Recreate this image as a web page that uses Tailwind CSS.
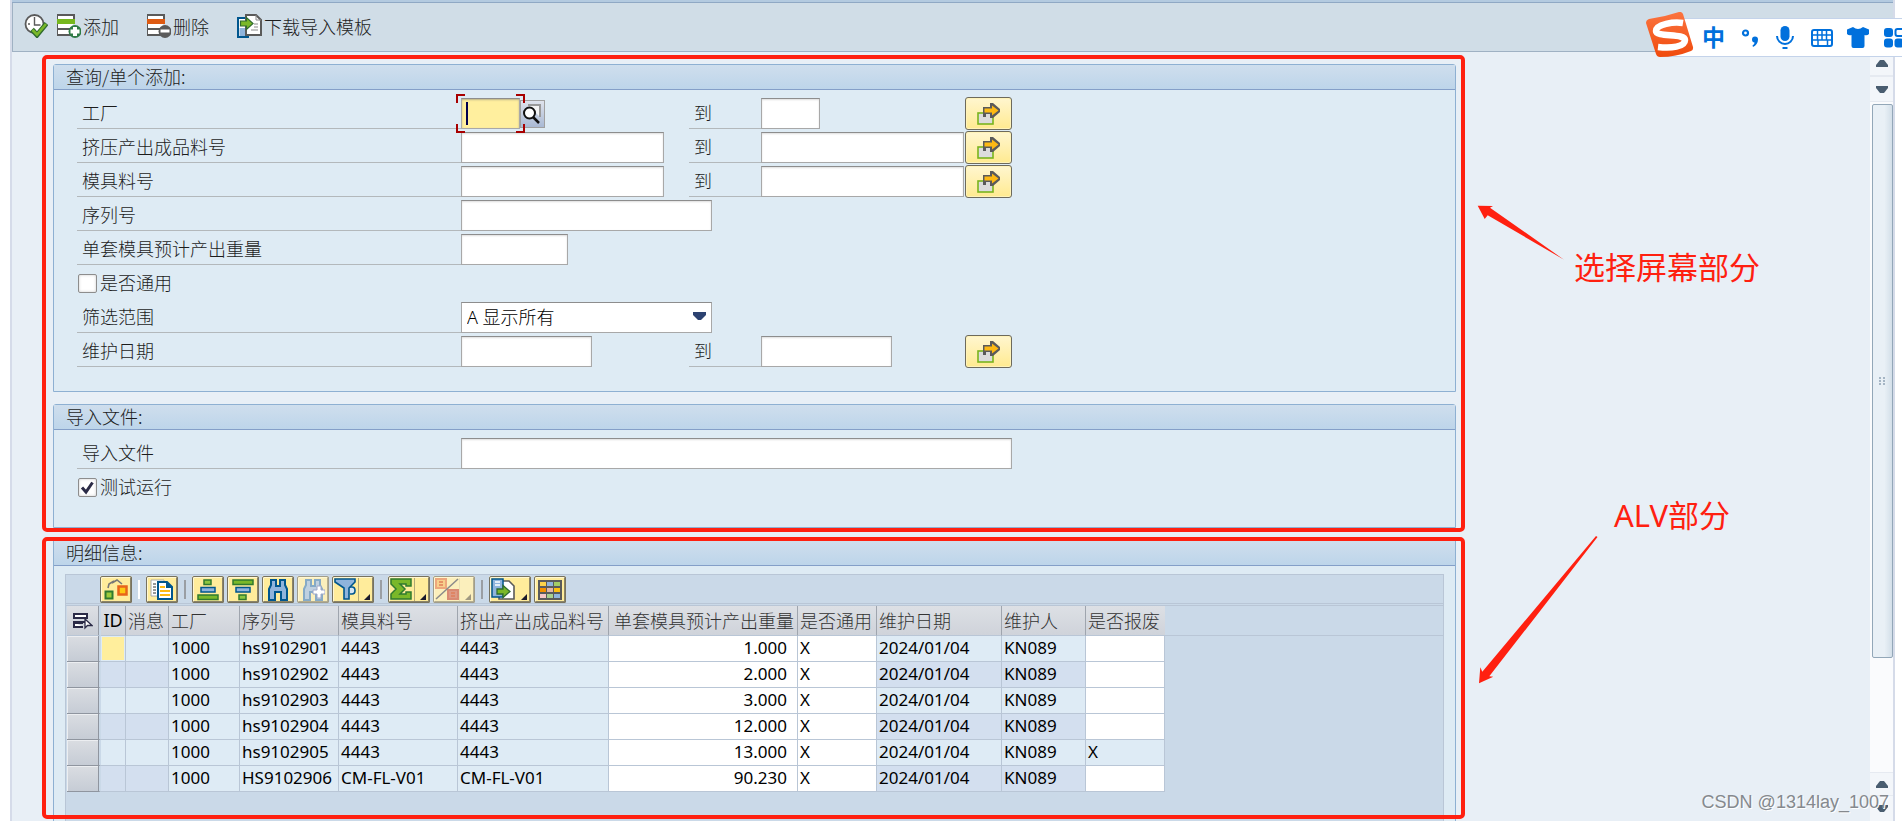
<!DOCTYPE html>
<html lang="zh-CN">
<head>
<meta charset="utf-8">
<meta name="viewport" content="width=device-width, initial-scale=1">
<title>模具维护</title>
<script src="https://cdn.jsdelivr.net/npm/@tailwindcss/browser@4"></script>
</head>
<body class="h-screen overflow-hidden bg-white pl-[10px] pr-[7px] font-['Noto_Sans','Noto_Sans_CJK_SC',sans-serif] text-[18px] leading-6 text-[#1c1c1c]">

<!-- shared symbols -->
<svg class="hidden">
  <symbol id="multi" viewBox="0 0 24 22">
    <rect x="1" y="10" width="15" height="11" fill="#dcdcdc" stroke="#7ab41d" stroke-width="1.600"/>
    <path d="M6 4h7V0h3l7 6v3l-7 6h-3v-4H9v3H6z" fill="#5a5a5a"/>
    <path d="M7.500 5.500H15V2.500l6.500 5L15 12.500V9.500H7.500z" fill="#fdb913"/>
  </symbol>
  <symbol id="corner" viewBox="0 0 6 6"><path d="M6 0V6H0z" fill="#1a1a2a"/></symbol>
</svg>

<div class="flex h-full flex-col border-x-2 border-[#d5dbe9] bg-[#e8eff6]">
  <div class="h-[3px] shrink-0 border-b border-[#8fa8c4] bg-[#b3cae0]"></div>

  <!-- application toolbar -->
  <header class="flex h-[49px] shrink-0 items-center border-b border-l border-b-[#9fb1c3] border-l-[#9fb1c3] bg-[#d0dde7] pb-[2px] pl-[11px] font-['Noto_Sans_CJK_SC',sans-serif] font-light">
    <button type="button" aria-label="执行" class="mr-[9px] h-6 w-6">
      <svg viewBox="0 0 24 24" class="size-6">
        <circle cx="10.500" cy="10" r="9" fill="#fff" stroke="#5a5a5a" stroke-width="1.800"/>
        <path d="M10.500 3v8h6M4 10h2M10.500 17v-2" fill="none" stroke="#5a5a5a" stroke-width="1.400"/>
        <path d="M8 15.500l5 5.500L22.500 9.500" fill="none" stroke="#2f6b2f" stroke-width="5"/>
        <path d="M8.500 16l4.500 4.500L22 10" fill="none" stroke="#7ab829" stroke-width="2.600"/>
      </svg>
    </button>
    <button type="button" class="mr-[28px] flex items-center gap-[2px]">
      <svg viewBox="0 0 24 24" class="size-6">
        <path d="M0 0h18v22H0z" fill="#5a5a5a"/>
        <path d="M1 2h15v12H1zM1 16h15v4H1z" fill="#fff"/>
        <path d="M0 5h18v5H0z" fill="#76b71d"/>
        <path d="M16 10h2v12h-2z" fill="#d0dde7"/>
        <circle cx="18" cy="17.500" r="6.500" fill="#2f7a46"/>
        <path d="M16 13h4v2.500h2.500v4H20V22h-4v-2.500h-2.500v-4H16z" fill="#fff"/>
      </svg>
      <span>添加</span>
    </button>
    <button type="button" class="mr-[28px] flex items-center gap-[2px]">
      <svg viewBox="0 0 24 24" class="size-6">
        <path d="M0 0h18v22H0z" fill="#5a5a5a"/>
        <path d="M1 2h15v12H1zM1 16h15v4H1z" fill="#fff"/>
        <path d="M0 5h18v5H0z" fill="#dd5a12"/>
        <path d="M16 10h2v12h-2z" fill="#d0dde7"/>
        <circle cx="18" cy="17.500" r="6.500" fill="#5a5a5a"/>
        <path d="M13.500 15.500h9v3h-9z" fill="#fff"/>
      </svg>
      <span>删除</span>
    </button>
    <button type="button" class="flex items-center gap-[2px]">
      <svg viewBox="0 0 25 24" class="h-6 w-[25px]">
        <path d="M8 4H1v19h11" fill="#fff" stroke="#00568e" stroke-width="2"/>
        <rect x="2.500" y="14" width="6" height="8" fill="#8fb4dc"/>
        <path d="M9 1h10l5 5v15H9z" fill="#fff" stroke="#5a5a5a" stroke-width="2"/>
        <path d="M19 1v5h5M17 10h4M17 13h4M14 16h7" fill="none" stroke="#8a8a8a"/>
        <path d="M3.500 7h6V3.500l6.500 6-6.500 6V12h-6z" fill="#7ab829" stroke="#2f6b2f" stroke-width="1.200"/>
      </svg>
      <span>下载导入模板</span>
    </button>
  </header>

  <div class="flex min-h-0 flex-1">
    <main class="flex min-w-0 flex-1 flex-col gap-[5px] pl-[30px] pt-[3px]">

      <!-- selection screen -->
      <div class="flex shrink-0">
        <div class="min-w-0 flex-1 rounded-[5px] border-4 border-[#ff2010] pl-[7px] pr-[5px] pt-[5px]">
          <section class="rounded-t-[3px] border border-[#8eb0d2] bg-[#deebf4] pb-[23px]">
            <h2 class="flex h-[25px] items-center border-b border-[#849fc8] bg-linear-to-b from-[#cfdeed] to-[#bdd5ea] pb-[2px] pl-3 font-['Noto_Sans_CJK_SC',sans-serif] font-light">查询/单个添加:</h2>
            <form class="pl-[23px] pt-[6px] font-['Noto_Sans_CJK_SC',sans-serif] font-light">
              <div class="flex h-[34px] items-end pb-px">
                <label for="plant" class="flex h-[31px] w-[384px] items-center border-b border-[#b3b8bb] pb-[2px] pl-[5px]">工厂</label>
                <div class="flex w-[228px] items-end">
                  <div class="relative">
                    <input id="plant" class="block h-[31px] w-[59px] border border-[#a8a8a8] border-t-[#8d8d8d] bg-[#ffef9e] px-1.5 shadow-[inset_0_1px_2px_#b9b18a]">
                    <span class="absolute left-[5px] top-1 h-[23px] w-[2px] bg-[#00004f]"></span>
                    <svg viewBox="0 0 69 39" class="pointer-events-none absolute -left-[5px] -top-[4px] z-10 h-[39px] w-[69px]" fill="none" stroke="#a80000" stroke-width="2">
                      <path d="M1 9V1H9M60 1h8v8M68 30v8h-8M9 38H1v-8"/>
                    </svg>
                  </div>
                  <button type="button" aria-label="搜索帮助" class="mb-px h-[28px] w-[25px] border border-[#a0a0a0] bg-linear-to-b from-[#dfe3ec] to-[#a9b9d4]">
                    <svg viewBox="0 0 23 26" class="h-[26px] w-[23px]">
                      <path d="M7 4h12v12" fill="#f4f4f4" stroke="#9a9a9a" stroke-width="2"/>
                      <circle cx="8.500" cy="12" r="5.500" fill="#fff" stroke="#111" stroke-width="2"/>
                      <path d="M12 16l6 6" stroke="#111" stroke-width="2.500"/>
                    </svg>
                  </button>
                </div>
                <label for="plant2" class="flex h-[31px] w-[72px] items-center border-b border-[#b3b8bb] pb-[2px] pl-[5px]">到</label>
                <div class="w-[204px]"><input id="plant2" class="block h-[31px] w-[59px] border border-[#a8a8a8] border-t-[#8d8d8d] bg-white px-1.5 shadow-[inset_0_1px_2px_#ddd]"></div>
                <button type="button" aria-label="多项选择" class="-mb-px grid h-[33px] w-[47px] place-items-center rounded-[3px] border border-[#6d6a5c] bg-linear-to-b from-[#fff6cf] to-[#ffea8f] shadow-[inset_0_0_0_1px_#fff3b8]"><svg class="h-[22px] w-6"><use href="#multi"/></svg></button>
              </div>
              <div class="flex h-[34px] items-end pb-px">
                <label for="mat" class="flex h-[31px] w-[384px] items-center border-b border-[#b3b8bb] pb-[2px] pl-[5px]">挤压产出成品料号</label>
                <div class="w-[228px]"><input id="mat" class="block h-[31px] w-[203px] border border-[#a8a8a8] border-t-[#8d8d8d] bg-white px-1.5 shadow-[inset_0_1px_2px_#ddd]"></div>
                <label for="mat2" class="flex h-[31px] w-[72px] items-center border-b border-[#b3b8bb] pb-[2px] pl-[5px]">到</label>
                <div class="w-[204px]"><input id="mat2" class="block h-[31px] w-[203px] border border-[#a8a8a8] border-t-[#8d8d8d] bg-white px-1.5 shadow-[inset_0_1px_2px_#ddd]"></div>
                <button type="button" aria-label="多项选择" class="-mb-px grid h-[33px] w-[47px] place-items-center rounded-[3px] border border-[#6d6a5c] bg-linear-to-b from-[#fff6cf] to-[#ffea8f] shadow-[inset_0_0_0_1px_#fff3b8]"><svg class="h-[22px] w-6"><use href="#multi"/></svg></button>
              </div>
              <div class="flex h-[34px] items-end pb-px">
                <label for="mold" class="flex h-[31px] w-[384px] items-center border-b border-[#b3b8bb] pb-[2px] pl-[5px]">模具料号</label>
                <div class="w-[228px]"><input id="mold" class="block h-[31px] w-[203px] border border-[#a8a8a8] border-t-[#8d8d8d] bg-white px-1.5 shadow-[inset_0_1px_2px_#ddd]"></div>
                <label for="mold2" class="flex h-[31px] w-[72px] items-center border-b border-[#b3b8bb] pb-[2px] pl-[5px]">到</label>
                <div class="w-[204px]"><input id="mold2" class="block h-[31px] w-[203px] border border-[#a8a8a8] border-t-[#8d8d8d] bg-white px-1.5 shadow-[inset_0_1px_2px_#ddd]"></div>
                <button type="button" aria-label="多项选择" class="-mb-px grid h-[33px] w-[47px] place-items-center rounded-[3px] border border-[#6d6a5c] bg-linear-to-b from-[#fff6cf] to-[#ffea8f] shadow-[inset_0_0_0_1px_#fff3b8]"><svg class="h-[22px] w-6"><use href="#multi"/></svg></button>
              </div>
              <div class="flex h-[34px] items-end pb-px">
                <label for="serial" class="flex h-[31px] w-[384px] items-center border-b border-[#b3b8bb] pb-[2px] pl-[5px]">序列号</label>
                <input id="serial" class="block h-[31px] w-[251px] border border-[#a8a8a8] border-t-[#8d8d8d] bg-white px-1.5 shadow-[inset_0_1px_2px_#ddd]">
              </div>
              <div class="flex h-[34px] items-end pb-px">
                <label for="weight" class="flex h-[31px] w-[384px] items-center border-b border-[#b3b8bb] pb-[2px] pl-[5px]">单套模具预计产出重量</label>
                <input id="weight" class="block h-[31px] w-[107px] border border-[#a8a8a8] border-t-[#8d8d8d] bg-white px-1.5 shadow-[inset_0_1px_2px_#ddd]">
              </div>
              <div class="flex h-[34px] items-center gap-[3px] pl-px">
                <input id="common" type="checkbox" class="size-[19px] appearance-none rounded-[2px] border border-[#8d8d8d] bg-white shadow-[inset_0_0_3px_#ccc]">
                <label for="common" class="pb-[2px]">是否通用</label>
              </div>
              <div class="flex h-[34px] items-end pb-px">
                <label for="range" class="flex h-[31px] w-[384px] items-center border-b border-[#b3b8bb] pb-[2px] pl-[5px]">筛选范围</label>
                <div class="relative">
                  <select id="range" class="block h-[31px] w-[251px] appearance-none border border-[#a8a8a8] border-t-[#8d8d8d] bg-white pb-[2px] pl-[5px] font-['Noto_Sans','Noto_Sans_CJK_SC',sans-serif] text-black"><option>A 显示所有</option></select>
                  <svg viewBox="0 0 13 8" class="pointer-events-none absolute right-[6px] top-[10px] h-2 w-[13px]"><path d="M0 0H13V3L8 8H5L0 3z" fill="#2c4271"/></svg>
                </div>
              </div>
              <div class="flex h-[34px] items-end pb-px">
                <label for="date" class="flex h-[31px] w-[384px] items-center border-b border-[#b3b8bb] pb-[2px] pl-[5px]">维护日期</label>
                <div class="w-[228px]"><input id="date" class="block h-[31px] w-[131px] border border-[#a8a8a8] border-t-[#8d8d8d] bg-white px-1.5 shadow-[inset_0_1px_2px_#ddd]"></div>
                <label for="date2" class="flex h-[31px] w-[72px] items-center border-b border-[#b3b8bb] pb-[2px] pl-[5px]">到</label>
                <div class="w-[204px]"><input id="date2" class="block h-[31px] w-[131px] border border-[#a8a8a8] border-t-[#8d8d8d] bg-white px-1.5 shadow-[inset_0_1px_2px_#ddd]"></div>
                <button type="button" aria-label="多项选择" class="-mb-px grid h-[33px] w-[47px] place-items-center rounded-[3px] border border-[#6d6a5c] bg-linear-to-b from-[#fff6cf] to-[#ffea8f] shadow-[inset_0_0_0_1px_#fff3b8]"><svg class="h-[22px] w-6"><use href="#multi"/></svg></button>
              </div>
            </form>
          </section>

          <section class="mt-3 rounded-t-[3px] border border-[#8eb0d2] bg-[#deebf4] pb-[23px] font-['Noto_Sans_CJK_SC',sans-serif] font-light">
            <h2 class="flex h-[25px] items-center border-b border-[#849fc8] bg-linear-to-b from-[#cfdeed] to-[#bdd5ea] pb-[2px] pl-3">导入文件:</h2>
            <div class="pl-[23px] pt-[6px]">
              <div class="flex h-[34px] items-end pb-px">
                <label for="file" class="flex h-[31px] w-[384px] items-center border-b border-[#b3b8bb] pb-[2px] pl-[5px]">导入文件</label>
                <input id="file" class="block h-[31px] w-[551px] border border-[#a8a8a8] border-t-[#8d8d8d] bg-white px-1.5 shadow-[inset_0_1px_2px_#ddd]">
              </div>
              <div class="flex h-[34px] items-center gap-[3px] pl-px">
                <div class="relative">
                  <input id="test" type="checkbox" checked class="peer block size-[19px] appearance-none rounded-[2px] border border-[#8d8d8d] bg-white shadow-[inset_0_0_3px_#ccc]">
                  <svg viewBox="0 0 19 19" class="pointer-events-none invisible absolute inset-0 size-[19px] peer-checked:visible"><path d="M4 9.500l4 4.500L14.500 4.500" fill="none" stroke="#2b2b47" stroke-width="3"/></svg>
                </div>
                <label for="test" class="pb-[2px]">测试运行</label>
              </div>
            </div>
          </section>
        </div>

        <aside class="relative w-[405px] shrink-0 pl-[109px] pt-[192px] font-['Noto_Sans','Noto_Sans_CJK_SC',sans-serif] text-[31px] leading-10 text-[#ff2010]">
          <p>选择屏幕部分</p>
          <svg viewBox="0 0 88 56" class="absolute left-[12px] top-[150px] h-[56px] w-[88px]"><path d="M0.700 0.700L16 1l-3 1.700L87 54.700 10.700 10.300 7.700 14z" fill="#ff2010"/></svg>
        </aside>
      </div>

      <!-- ALV grid -->
      <div class="flex min-h-0 flex-1">
        <div class="relative flex min-w-0 flex-1 pl-[11px] pr-[9px] pt-[3px]">
          <div class="pointer-events-none absolute inset-x-0 bottom-[2px] top-0 z-10 rounded-[5px] border-4 border-[#ff2010]"></div>
          <section class="flex min-w-0 flex-1 flex-col border-x border-t border-[#8eb0d2] bg-[#deebf4]">
            <h2 class="flex h-[25px] shrink-0 items-center border-b border-[#849fc8] bg-linear-to-b from-[#cfdeed] to-[#bdd5ea] pb-[2px] pl-3 font-['Noto_Sans_CJK_SC',sans-serif] font-light">明细信息:</h2>
            <div class="mx-[11px] mt-2 flex-1 border-x border-t border-[#b9c6d6] bg-[#cad9e8]">
              <div class="mb-px flex h-[29px] items-start gap-[3px] border-b border-[#b9c6d6] pl-[34px] pt-px">
                <button type="button" aria-label="明细" class="grid h-[27px] w-8 place-items-center rounded-[2px] border-2 border-[#fff7d2] border-b-[#8b8468] border-r-[#8b8468] bg-[#ffec9b] outline-1 -outline-offset-1 outline-[#77725f]">
                  <svg viewBox="0 0 24 22" class="h-[22px] w-6"><rect x="1.500" y="12.500" width="7" height="7" fill="#9ccb3b" stroke="#2f7a2f" stroke-width="2"/><rect x="14.500" y="7.500" width="8" height="8" fill="#fdc913" stroke="#e8641b" stroke-width="2.500"/><path d="M4 9l1-4 5-3M8 4l5-3 5 4" fill="none" stroke="#777" stroke-width="1.600"/></svg>
                </button>
                <span class="mx-[3px] mt-1 h-[19px] w-[2px] bg-white"></span>
                <button type="button" aria-label="复制" class="grid h-[27px] w-8 place-items-center rounded-[2px] border-2 border-[#fff7d2] border-b-[#8b8468] border-r-[#8b8468] bg-[#ffec9b] outline-1 -outline-offset-1 outline-[#77725f]">
                  <svg viewBox="0 0 24 22" class="h-[22px] w-6"><path d="M1 1h13v16H1z" fill="#fff" stroke="#aaa"/><path d="M3 5h3M3 8h3M3 11h3M3 14h3" stroke="#777" stroke-width="1.500"/><path d="M8 3h9l5 5v12H8z" fill="#fff" stroke="#00568e" stroke-width="2"/><path d="M16 2v7h7z" fill="#00568e"/><path d="M10 8h5M10 12h10M10 16h10" stroke="#fdb913" stroke-width="2"/></svg>
                </button>
                <span class="mx-[3px] mt-1 h-[19px] w-[2px] bg-[#9a9ea3]"></span>
                <button type="button" aria-label="升序排序" class="grid h-[27px] w-8 place-items-center rounded-[2px] border-2 border-[#fff7d2] border-b-[#8b8468] border-r-[#8b8468] bg-[#ffec9b] outline-1 -outline-offset-1 outline-[#77725f]">
                  <svg viewBox="0 0 24 22" class="h-[22px] w-6" stroke-width="1.500"><rect x="8" y="1" width="7" height="4.500" fill="#8cc63f" stroke="#2f7a2f"/><rect x="5" y="8.500" width="14" height="4.500" fill="#8fb4dc" stroke="#00568e"/><rect x="2" y="16" width="20" height="4.500" fill="#7ab829" stroke="#2f7a2f"/></svg>
                </button>
                <button type="button" aria-label="降序排序" class="grid h-[27px] w-8 place-items-center rounded-[2px] border-2 border-[#fff7d2] border-b-[#8b8468] border-r-[#8b8468] bg-[#ffec9b] outline-1 -outline-offset-1 outline-[#77725f]">
                  <svg viewBox="0 0 24 22" class="h-[22px] w-6" stroke-width="1.500"><rect x="2" y="1" width="20" height="4.500" fill="#7ab829" stroke="#2f7a2f"/><rect x="5" y="8.500" width="14" height="4.500" fill="#8fb4dc" stroke="#00568e"/><rect x="8" y="16" width="7" height="4.500" fill="#8cc63f" stroke="#2f7a2f"/></svg>
                </button>
                <button type="button" aria-label="查找" class="grid h-[27px] w-8 place-items-center rounded-[2px] border-2 border-[#fff7d2] border-b-[#8b8468] border-r-[#8b8468] bg-[#ffec9b] outline-1 -outline-offset-1 outline-[#77725f]">
                  <svg viewBox="0 0 24 22" class="h-[22px] w-6"><path d="M5 1h5v6h4V1h5v5l2 4v11h-6v-8H9v8H3V10l2-4z" fill="#8fb4dc" stroke="#00568e" stroke-width="2"/></svg>
                </button>
                <button type="button" aria-label="查找下一个" disabled class="grid h-[27px] w-8 place-items-center rounded-[2px] border-2 border-[#fff7d2] border-b-[#b5ae90] border-r-[#b5ae90] bg-[#fbefbc] outline-1 -outline-offset-1 outline-[#a19d8b]">
                  <svg viewBox="0 0 24 22" class="h-[22px] w-6"><path d="M5 1h5v6h4V1h5v5l2 4v11h-6v-8H9v8H3V10l2-4z" fill="#bfd0e0" stroke="#86aac6" stroke-width="2"/><path d="M16 7h4v4h4v4h-4v4h-4v-4h-4v-4h4z" fill="#fff" stroke="#9fa8c8"/></svg>
                </button>
                <button type="button" aria-label="过滤器" class="flex h-[27px] w-[42px] rounded-[2px] border-2 border-[#fff7d2] border-b-[#8b8468] border-r-[#8b8468] bg-[#ffec9b] outline-1 -outline-offset-1 outline-[#77725f]">
                  <svg viewBox="0 0 24 22" class="h-[22px] w-6"><path d="M15 9h3q3 0 3 3.500T18 16h-2" fill="#d5e4f2" stroke="#00568e" stroke-width="1.600"/><path d="M1 1h20v3l-6 6v11h-5V10L1 4z" fill="#8fb4dc" stroke="#00568e" stroke-width="1.600"/></svg>
                  <span class="grid h-full w-[14px] place-items-end border-l border-[#b3a878] pb-px pr-[2px]"><svg class="size-[6px]"><use href="#corner"/></svg></span>
                </button>
                <span class="mx-[3px] mt-1 h-[19px] w-[2px] bg-[#9a9ea3]"></span>
                <button type="button" aria-label="总计" class="flex h-[27px] w-[42px] rounded-[2px] border-2 border-[#fff7d2] border-b-[#8b8468] border-r-[#8b8468] bg-[#ffec9b] outline-1 -outline-offset-1 outline-[#77725f]">
                  <svg viewBox="0 0 24 22" class="h-[22px] w-6"><path d="M1 1h20v7h-5V6h-6l5 5-5 5h6v-2h5v7H1v-5l5-5-5-5z" fill="#7ab829" stroke="#2f7a2f" stroke-width="1.500"/></svg>
                  <span class="grid h-full w-[14px] place-items-end border-l border-[#b3a878] pb-px pr-[2px]"><svg class="size-[6px]"><use href="#corner"/></svg></span>
                </button>
                <button type="button" aria-label="小计" disabled class="flex h-[27px] w-[42px] rounded-[2px] border-2 border-[#fff7d2] border-b-[#b5ae90] border-r-[#b5ae90] bg-[#fbefbc] outline-1 -outline-offset-1 outline-[#a19d8b]">
                  <svg viewBox="0 0 24 22" class="h-[22px] w-6"><rect x="1" y="1" width="10" height="9" fill="#f8d08c" stroke="#eda77c" stroke-width="2"/><rect x="13" y="12" width="10" height="9" fill="#dd9a85" stroke="#d98a72" stroke-width="2"/><path d="M4 4h4M4 7h4M16 15h4M16 18h4" stroke="#e07f5a" stroke-width="1.500"/><path d="M1 21L23 1" stroke="#8a8a8a" stroke-width="1.500"/></svg>
                  <span class="grid h-full w-[14px] place-items-end border-l border-[#d2cba6] pb-px pr-[2px] opacity-40"><svg class="size-[6px]"><use href="#corner"/></svg></span>
                </button>
                <span class="mx-[3px] mt-1 h-[19px] w-[2px] bg-[#9a9ea3]"></span>
                <button type="button" aria-label="导出" class="flex h-[27px] w-[42px] rounded-[2px] border-2 border-[#fff7d2] border-b-[#8b8468] border-r-[#8b8468] bg-[#ffec9b] outline-1 -outline-offset-1 outline-[#77725f]">
                  <svg viewBox="0 0 24 22" class="h-[22px] w-6"><path d="M9 3h9l5 5v13H8z" fill="#fff" stroke="#5a5a5a" stroke-width="1.600"/><path d="M1 1h11v18H1z" fill="#8fb4dc" stroke="#00568e" stroke-width="1.500"/><path d="M4 4h5M4 7h5" stroke="#fff" stroke-width="1.500"/><path d="M6 11h6V7.500l7 6-7 6V16H6z" fill="#7ab829" stroke="#2f6b2f" stroke-width="1.300"/></svg>
                  <span class="grid h-full w-[14px] place-items-end pb-px pr-[2px]"><svg class="size-[6px]"><use href="#corner"/></svg></span>
                </button>
                <button type="button" aria-label="更改布局" class="grid h-[27px] w-8 place-items-center rounded-[2px] border-2 border-[#fff7d2] border-b-[#8b8468] border-r-[#8b8468] bg-[#ffec9b] outline-1 -outline-offset-1 outline-[#77725f]">
                  <svg viewBox="0 0 24 22" class="h-[22px] w-6"><rect y="1" width="24" height="20" fill="#5a5a5a"/><path d="M2 3h6v4H2z" fill="#fbd34b"/><path d="M9 3h6v4H9z" fill="#8fb4dc"/><path d="M16 3h6v4h-6z" fill="#a3cc66"/><path d="M2 9h6v4H2z" fill="#f39100"/><path d="M9 9h6v4H9z" fill="#e0b8a8"/><path d="M16 9h6v4h-6z" fill="#fdbf0f"/><path d="M2 15h6v4H2z" fill="#f6c6c6"/><path d="M9 15h6v4H9z" fill="#a8d08d"/><path d="M16 15h6v4h-6z" fill="#8fb4dc"/></svg>
                </button>
              </div>
              <div class="flex items-start border-t border-[#b9c6d6] pl-px">
                <table class="w-[1098px] shrink-0 table-fixed border-separate border-spacing-0 whitespace-nowrap text-left text-[17px] leading-[23px] text-black">
                  <colgroup><col class="w-[34px]"><col class="w-[25px]"><col class="w-[43px]"><col class="w-[71px]"><col class="w-[99px]"><col class="w-[119px]"><col class="w-[151px]"><col class="w-[189px]"><col class="w-[79px]"><col class="w-[125px]"><col class="w-[84px]"><col class="w-[79px]"></colgroup>
                  <thead class="font-['Noto_Sans_CJK_SC',sans-serif] text-[18px] text-[#333]">
                    <tr class="h-[30px]">
                      <th aria-label="全选" class="border-b border-r-2 border-b-[#b9c6d6] border-r-[#cad9e8] bg-linear-to-b from-[#dde0e5] to-[#c9ced6] bg-clip-padding p-0 pl-[6px] shadow-[inset_-1px_0_#969ca6]">
                        <svg viewBox="0 0 20 18" class="h-[18px] w-5"><path d="M1 2h13v4H1zM1 11h9M1 10v5h9" fill="#fff" stroke="#2b2b47" stroke-width="2"/><path d="M0 10h14" stroke="#2b2b47" stroke-width="2"/><path d="M12 7v9l2.500-2.500H19z" fill="#fff" stroke="#2b2b47" stroke-width="1.300"/></svg>
                      </th>
                      <th class="border-b border-r border-b-[#b9c6d6] border-r-[#9fa5ae] bg-linear-to-b from-[#dde0e5] to-[#cfd3da] p-0 text-center font-['Noto_Sans'] font-normal text-black">ID</th>
                      <th class="border-b border-r border-b-[#b9c6d6] border-r-[#9fa5ae] bg-linear-to-b from-[#dde0e5] to-[#cfd3da] p-0 pl-[2px] font-light">消息</th>
                      <th class="border-b border-r border-b-[#b9c6d6] border-r-[#9fa5ae] bg-linear-to-b from-[#dde0e5] to-[#cfd3da] p-0 pl-[2px] font-light">工厂</th>
                      <th class="border-b border-r border-b-[#b9c6d6] border-r-[#9fa5ae] bg-linear-to-b from-[#dde0e5] to-[#cfd3da] p-0 pl-[2px] font-light">序列号</th>
                      <th class="border-b border-r border-b-[#b9c6d6] border-r-[#9fa5ae] bg-linear-to-b from-[#dde0e5] to-[#cfd3da] p-0 pl-[2px] font-light">模具料号</th>
                      <th class="border-b border-r border-b-[#b9c6d6] border-r-[#9fa5ae] bg-linear-to-b from-[#dde0e5] to-[#cfd3da] p-0 pl-[2px] font-light">挤出产出成品料号</th>
                      <th class="border-b border-r border-b-[#b9c6d6] border-r-[#9fa5ae] bg-linear-to-b from-[#dde0e5] to-[#cfd3da] p-0 pr-[3px] text-right font-light">单套模具预计产出重量</th>
                      <th class="border-b border-r border-b-[#b9c6d6] border-r-[#9fa5ae] bg-linear-to-b from-[#dde0e5] to-[#cfd3da] p-0 pl-[2px] font-light">是否通用</th>
                      <th class="border-b border-r border-b-[#b9c6d6] border-r-[#9fa5ae] bg-linear-to-b from-[#dde0e5] to-[#cfd3da] p-0 pl-[2px] font-light">维护日期</th>
                      <th class="border-b border-r border-b-[#b9c6d6] border-r-[#9fa5ae] bg-linear-to-b from-[#dde0e5] to-[#cfd3da] p-0 pl-[2px] font-light">维护人</th>
                      <th class="border-b border-b-[#b9c6d6] bg-linear-to-b from-[#dde0e5] to-[#cfd3da] p-0 pl-[2px] font-light">是否报废</th>
                    </tr>
                  </thead>
                  <tbody id="rows"></tbody>
                </table>
                <div class="h-[30px] flex-1 border-b border-[#b9c6d6]"></div>
              </div>
            </div>
          </section>
        </div>

        <aside class="relative w-[405px] shrink-0 font-['Noto_Sans','Noto_Sans_CJK_SC',sans-serif] text-[31px] leading-10 text-[#ff2010]">
          <p class="absolute -top-[42px] left-[149px]">ALV部分</p>
          <svg viewBox="0 0 120 150" class="absolute -top-[2px] left-[13px] h-[150px] w-[120px]"><path d="M1 148.300L2.300 132.300l2 4.400L118 1l1.500 1L11.300 141.300l4 .4z" fill="#ff2010"/></svg>
        </aside>
      </div>
    </main>

    <!-- vertical scrollbar -->
    <div class="flex w-[23px] shrink-0 flex-col bg-[#fafbfd]">
      <button type="button" aria-label="向上" class="grid h-[25px] shrink-0 place-items-center border-b-2 border-[#e6eaf1] bg-[#f3f6fa]"><svg viewBox="0 0 12 7" class="h-[7px] w-3"><path d="M0 7V5l4-5h4l4 5v2z" fill="#4a5d70"/></svg></button>
      <button type="button" aria-label="向下" class="mb-[2px] grid h-[25px] shrink-0 place-items-center border-b border-[#e6eaf1] bg-[#f3f6fa]"><svg viewBox="0 0 12 7" class="h-[7px] w-3"><path d="M0 0V2l4 5h4l4-5V0z" fill="#4a5d70"/></svg></button>
      <div class="ml-[2px] flex min-h-0 flex-[554] items-center justify-center rounded-[2px] border border-[#93a7b8] bg-linear-to-r from-[#e9f0f6] from-60% to-[#d3dfe9]">
        <svg viewBox="0 0 7 9" class="h-[9px] w-[7px]"><path d="M0 0h2v2H0zM4 0h2v2H4zM0 3h2v2H0zM4 3h2v2H4zM0 6h2v2H0zM4 6h2v2H4z" fill="#a5b5c4"/></svg>
      </div>
      <div class="min-h-0 flex-[114]"></div>
      <button type="button" aria-label="向上" class="grid h-[24px] shrink-0 place-items-center border-y border-[#e6eaf1] bg-[#f3f6fa]"><svg viewBox="0 0 12 7" class="h-[7px] w-3"><path d="M0 7V5l4-5h4l4 5v2z" fill="#4a5d70"/></svg></button>
      <button type="button" aria-label="向下" class="grid h-[25px] shrink-0 place-items-center bg-[#f3f6fa]"><svg viewBox="0 0 12 7" class="h-[7px] w-3"><path d="M0 0V2l4 5h4l4-5V0z" fill="#4a5d70"/></svg></button>
    </div>
  </div>
</div>

<!-- input method bar floating above the window -->
<div class="absolute right-0 top-[18px] flex h-[39px] w-[242px] items-center overflow-hidden border-y border-[#c4d3ea] bg-white pl-[42px] text-[#0070dc]">
  <span class="w-[22px] shrink-0 pb-[3px] text-center font-['Noto_Sans_CJK_SC',sans-serif] text-[23px] font-bold leading-none">中</span>
  <svg viewBox="0 0 18 20" class="ml-[17px] h-5 w-[18px] shrink-0"><circle cx="4.500" cy="5" r="2.500" fill="none" stroke="currentColor" stroke-width="2.200"/><path d="M11 11.500a3 3 0 0 1 6 0c0 3.500-2 6-5 7.500l-.5-1.500c1.500-1 2-2 2-3-1.500 0-2.500-1.200-2.500-3z" fill="currentColor"/></svg>
  <svg viewBox="0 0 18 24" class="ml-[17px] h-6 w-[18px] shrink-0"><rect x="4.500" y="0" width="9" height="15" rx="4.500" fill="currentColor"/><path d="M1 10a8 8 0 0 0 16 0" fill="none" stroke="currentColor" stroke-width="2"/><path d="M6.500 22h5" stroke="currentColor" stroke-width="2"/></svg>
  <svg viewBox="0 0 22 18" class="ml-[17px] h-[18px] w-[22px] shrink-0"><rect x="1" y="1" width="20" height="16" rx="2" fill="none" stroke="currentColor" stroke-width="2"/><path d="M2 6h18M2 11h18M6.500 2v9M11 2v9M15.500 2v9M7 11v5M16.500 11v5" stroke="currentColor" stroke-width="1.500"/></svg>
  <svg viewBox="0 0 22 21" class="ml-[14px] h-[21px] w-[22px] shrink-0"><path d="M6 0q5 4 10 0l6 2.500v4.500q-2 2-4.500 1V19q0 2-2 2h-9q-2 0-2-2V8Q2 9 0 7V2.500z" fill="currentColor"/></svg>
  <svg viewBox="0 0 20 20" class="ml-[15px] h-5 w-5 shrink-0"><rect width="9" height="9" rx="3" fill="currentColor"/><rect x="11.500" y="1" width="8" height="7" rx="2" fill="none" stroke="currentColor" stroke-width="2"/><rect y="10.500" width="9" height="9" rx="3" fill="currentColor"/><rect x="10.500" y="10.500" width="9" height="9" rx="3" fill="currentColor"/></svg>
</div>
<svg viewBox="0 0 48 46" class="absolute right-[208px] top-[12px] h-[46px] w-12">
  <defs><linearGradient id="orange" x1="0" y1="0" x2="0" y2="1"><stop offset="0" stop-color="#fb7440"/><stop offset="1" stop-color="#f04a0c"/></linearGradient></defs>
  <path d="M3 7Q18 5 33 0q3-.5 4 2l10 33q.500 3-2 4-15 6-31 6-3 0-4-3L0 11q0-3 3-4z" fill="url(#orange)"/>
  <path d="M37 11C28 9.500 10 12 10 19c0 6.500 29 2 29 9 0 7-14 8.500-27 7" fill="none" stroke="#fff" stroke-width="6.500"/>
</svg>

<p class="absolute bottom-[7px] right-[13px] font-['Liberation_Sans',sans-serif] text-[18px] text-[#85898e] [text-shadow:1px_1px_0_#fff]">CSDN @1314lay_1007</p>

<script>
const data = [
  ['1000','hs9102901','4443','4443','1.000','X','2024/01/04','KN089',''],
  ['1000','hs9102902','4443','4443','2.000','X','2024/01/04','KN089',''],
  ['1000','hs9102903','4443','4443','3.000','X','2024/01/04','KN089',''],
  ['1000','hs9102904','4443','4443','12.000','X','2024/01/04','KN089',''],
  ['1000','hs9102905','4443','4443','13.000','X','2024/01/04','KN089','X'],
  ['1000','HS9102906','CM-FL-V01','CM-FL-V01','90.230','X','2024/01/04','KN089','']
];
const styles = {
  light: 'h-[26px] border-b border-r border-[#b9c6d6] bg-[#deebf5] p-0 pb-[2px] pl-[2px]',
  alt: 'h-[26px] border-b border-r border-[#b9c6d6] bg-[#d3dfef] p-0 pb-[2px] pl-[2px]',
  white: 'h-[26px] border-b border-r border-[#b9c6d6] bg-white p-0 pb-[2px] pl-[2px]',
  num: 'h-[26px] border-b border-r border-[#b9c6d6] bg-white p-0 pb-[2px] pr-[10px] text-right',
  active: 'h-[26px] border-b border-r border-[#b9c6d6] bg-[#ffee9c] p-0 shadow-[inset_0_0_0_1px_#deebf5]',
  select: 'h-[26px] border-b border-r-2 border-b-[#8f959f] border-r-[#cad9e8] bg-linear-to-b from-[#dadde2] to-[#c6ccd5] bg-clip-padding p-0 shadow-[inset_-1px_0_#8f959f,inset_1px_1px_#eceef1]'
};
document.getElementById('rows').innerHTML = data.map((r, i) => {
  const band = i % 2 ? 'alt' : 'light';
  const kinds = ['select', i ? band : 'active', band, 'light', 'light', 'light', 'light', 'num', 'white', band, band, r[8] ? 'light' : 'white'];
  return '<tr>' + ['', '', '', ...r].map((v, c) => `<td class="${styles[kinds[c]]}">${v}</td>`).join('') + '</tr>';
}).join('');
</script>
</body>
</html>
